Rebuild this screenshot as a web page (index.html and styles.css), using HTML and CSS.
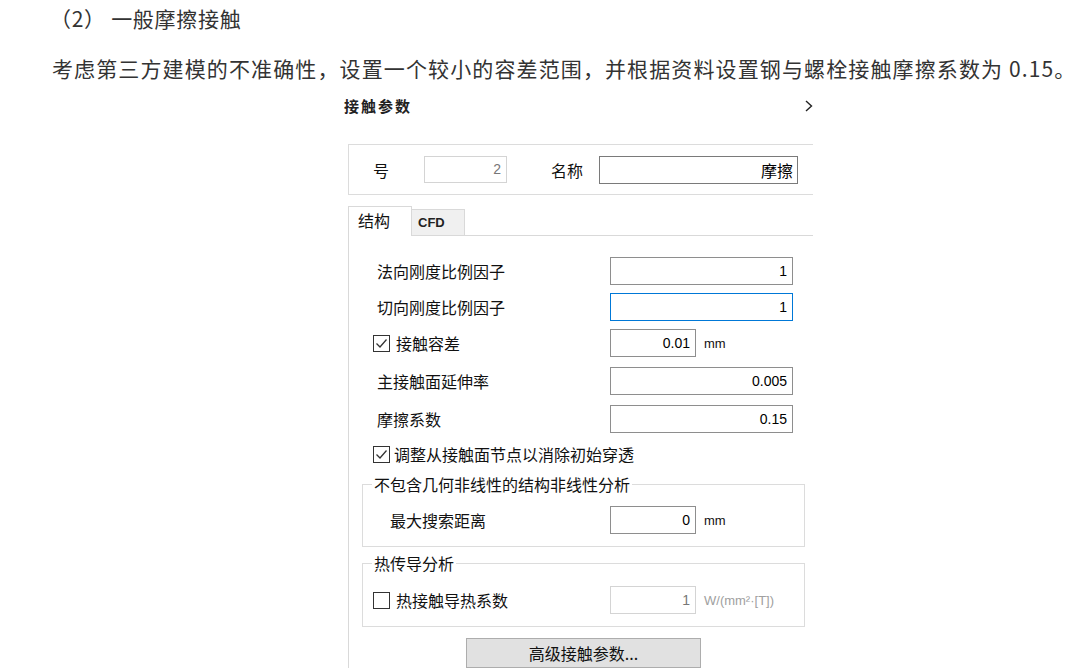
FILE: index.html
```html
<!DOCTYPE html>
<html lang="zh-CN">
<head>
<meta charset="utf-8">
<title>一般摩擦接触</title>
<link rel="stylesheet" href="styles.css">
</head>
<body>
<h3 class="heading">（2） 一般摩擦接触</h3>
<p class="para">考虑第三方建模的不准确性，设置一个较小的容差范围，并根据资料设置钢与螺栓接触摩擦系数为 0.15。</p>

<div class="dialog-wrap">
  <div class="title-row">
    <span class="title">接触参数</span>
    <svg class="chev" width="8" height="12" viewBox="0 0 8 12"><polyline points="1,1 6.5,6 1,11" fill="none" stroke="#222" stroke-width="1.4"/></svg>
  </div>
  <div class="dialog">
    <div class="idbox">
      <span class="id-lbl">号</span>
      <div class="inp inp-disabled inp-id">2</div>
      <span class="name-lbl">名称</span>
      <div class="inp inp-dark inp-name">摩擦</div>
    </div>

    <div class="tabs">
      <div class="tab tab-active">结构</div>
      <div class="tab tab-inactive">CFD</div>
      <div class="tab-fill"></div>
    </div>

    <div class="panel">
      <div class="row">
        <span class="lbl">法向刚度比例因子</span>
        <div class="inp inp-wide">1</div>
      </div>
      <div class="row mt8">
        <span class="lbl">切向刚度比例因子</span>
        <div class="inp inp-wide inp-focus">1</div>
      </div>
      <div class="row mt8">
        <span class="chk-lbl">
          <svg class="chk" width="17" height="17" viewBox="0 0 17 17"><rect x="0.5" y="0.5" width="16" height="16" fill="#fff" stroke="#333"/><polyline points="3.5,8.5 7,12 13.5,4.5" fill="none" stroke="#333" stroke-width="1.3"/></svg>
          <span>接触容差</span>
        </span>
        <div class="inp inp-short">0.01</div>
        <span class="unit">mm</span>
      </div>
      <div class="row mt10">
        <span class="lbl">主接触面延伸率</span>
        <div class="inp inp-wide">0.005</div>
      </div>
      <div class="row mt10">
        <span class="lbl">摩擦系数</span>
        <div class="inp inp-wide">0.15</div>
      </div>
      <div class="row-chk">
        <svg class="chk" width="17" height="17" viewBox="0 0 17 17"><rect x="0.5" y="0.5" width="16" height="16" fill="#fff" stroke="#333"/><polyline points="3.5,8.5 7,12 13.5,4.5" fill="none" stroke="#333" stroke-width="1.3"/></svg>
        <span>调整从接触面节点以消除初始穿透</span>
      </div>

      <fieldset class="group group1">
        <legend>不包含几何非线性的结构非线性分析</legend>
        <div class="row grow">
          <span class="lbl lbl-in">最大搜索距离</span>
          <div class="inp inp-short">0</div>
          <span class="unit">mm</span>
        </div>
      </fieldset>

      <fieldset class="group group2">
        <legend>热传导分析</legend>
        <div class="row grow">
          <span class="chk-lbl chk-in">
            <svg class="chk" width="17" height="17" viewBox="0 0 17 17"><rect x="0.5" y="0.5" width="16" height="16" fill="#fff" stroke="#333"/></svg>
            <span>热接触导热系数</span>
          </span>
          <div class="inp inp-short inp-disabled">1</div>
          <span class="unit unit-dis">W/(mm²·[T])</span>
        </div>
      </fieldset>

      <div class="btn">高级接触参数...</div>
    </div>
  </div>
</div>
</body>
</html>
```

FILE: styles.css
```css
html, body {
  margin: 0;
  padding: 0;
  background: #fff;
  overflow: hidden;
}
body {
  width: 1080px;
  height: 669px;
  font-family: "Noto Sans CJK SC", "Noto Sans", sans-serif;
  color: #333;
}
.heading {
  margin: 0;
  padding: 4px 0 0 50px;
  font-size: 21px;
  font-weight: normal;
  line-height: 28px;
  letter-spacing: 0.7px;
  color: #333;
}
.para {
  margin: 22px 0 0 0;
  padding-left: 52px;
  font-size: 21px;
  line-height: 28px;
  letter-spacing: 1.12px;
  white-space: nowrap;
  color: #333;
}
.dialog-wrap {
  margin: 14px 0 0 344px;
  width: 469px;
  overflow: hidden;
  color: #111;
}
.title-row {
  height: 20px;
  display: flex;
  justify-content: space-between;
  align-items: center;
}
.title {
  font-size: 15px;
  font-weight: bold;
  letter-spacing: 2px;
  line-height: 20px;
  color: #222;
}
.chev {
  margin-right: 0;
  display: block;
}
.dialog {
  margin: 28px 0 0 4px;
  width: 478px;
}
.idbox {
  height: 51px;
  box-sizing: border-box;
  border: 1px solid #dcdcdc;
  display: flex;
  align-items: center;
  padding-left: 24px;
  font-size: 16px;
}
.id-lbl {
  width: 51px;
}
.name-lbl {
  margin-left: 44px;
  width: 48px;
}
.inp {
  box-sizing: border-box;
  height: 28px;
  border: 1px solid #8e8e8e;
  background: #fff;
  text-align: right;
  padding-right: 5px;
  font-family: "Liberation Sans", Arial, sans-serif;
  font-size: 14px;
  line-height: 26px;
  color: #000;
}
.inp-id {
  width: 83px;
  height: 27px;
  line-height: 25px;
}
.inp-name {
  width: 199px;
  font-family: "Noto Sans CJK SC", sans-serif;
  font-size: 16px;
  padding-right: 4px;
}
.inp-dark {
  border-color: #7a7a7a;
}
.inp-disabled {
  border-color: #d4d4d4;
  color: #777;
}
.inp-focus {
  border-color: #0078d7;
}
.inp-wide {
  width: 183px;
}
.inp-short {
  width: 86px;
}
.tabs {
  margin-top: 11px;
  display: flex;
  align-items: flex-end;
  height: 30px;
}
.tab {
  box-sizing: border-box;
}
.tab-active {
  width: 64px;
  height: 30px;
  border: 1px solid #d9d9d9;
  border-bottom: none;
  padding-left: 9px;
  font-size: 16px;
  line-height: 26px;
  background: #fff;
}
.tab-inactive {
  width: 53px;
  height: 27px;
  border: 1px solid #d9d9d9;
  border-left: none;
  background: #f0f0f0;
  padding-left: 6px;
  font-family: "Liberation Sans", Arial, sans-serif;
  font-weight: bold;
  font-size: 13px;
  line-height: 26px;
  color: #222;
}
.tab-fill {
  flex: 1;
  height: 1px;
  background: #d9d9d9;
}
.panel {
  border-left: 1px solid #d9d9d9;
  padding: 21px 20px 0 13px;
  width: 443px;
  font-size: 16px;
}
.row {
  display: flex;
  align-items: center;
  height: 28px;
}
.mt8 { margin-top: 8px; }
.mt10 { margin-top: 10px; }
.lbl {
  box-sizing: border-box;
  width: 248px;
  padding-left: 15px;
  line-height: 20px;
}
.lbl-in {
  width: 247px;
  padding-left: 27px;
}
.chk-lbl {
  box-sizing: border-box;
  width: 248px;
  padding-left: 11px;
  display: flex;
  align-items: center;
  gap: 6px;
}
.chk-in {
  width: 247px;
  padding-left: 10px;
}
.chk {
  display: block;
  flex: none;
}
.unit {
  margin-left: 8px;
  font-family: "Liberation Sans", Arial, sans-serif;
  font-size: 13px;
  color: #111;
}
.unit-dis {
  color: #a0a0a0;
}
.row-chk {
  margin-top: 11px;
  height: 20px;
  display: flex;
  align-items: center;
  gap: 4px;
  padding-left: 11px;
}
.group {
  margin: 0;
  padding: 0 0 12px 0;
  min-width: 0;
  border: 1px solid #dcdcdc;
  box-sizing: border-box;
  width: 443px;
}
.group legend {
  margin-left: 9px;
  padding: 0 2px;
  font-size: 16px;
  line-height: 20px;
}
.group1 {
  margin-top: 10px;
}
.group1 .grow {
  margin-top: 12px;
}
.group2 {
  margin-top: 6px;
}
.group2 .grow {
  margin-top: 13px;
}
.btn {
  margin: 11px auto 0 auto;
  width: 235px;
  height: 30px;
  box-sizing: border-box;
  background: #e1e1e1;
  border: 1px solid #adadad;
  text-align: center;
  font-size: 16px;
  line-height: 28px;
  color: #111;
}
```
